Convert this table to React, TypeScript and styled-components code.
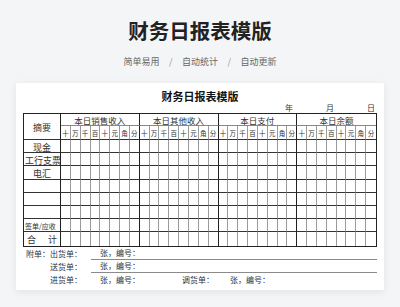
import React from 'react';
import styled, { createGlobalStyle } from 'styled-components';

const GlobalStyle = createGlobalStyle`
    html, body {
        margin: 0;
        padding: 0;
        background: #f4f5f7;
        font-family: "Noto Sans CJK SC", "Noto Sans", sans-serif;
    }
`;

const Page = styled.div`
    width: 400px;
    height: 307px;
    overflow: hidden;
    padding-top: 19px;
    box-sizing: border-box;
`;

const Title = styled.h1`
    margin: 0;
    font-size: 20.5px;
    line-height: 22px;
    font-weight: 700;
    color: #222;
    text-align: center;
`;

const Tagline = styled.div`
    margin-top: 14px;
    display: flex;
    justify-content: center;
    gap: 9.5px;
    font-size: 9px;
    line-height: 14px;
    color: #666;
`;

const Slash = styled.span`
    color: #999;
`;

const Card = styled.div`
    margin: 14px 16px 0;
    padding: 6px 7px 4px;
    background: #fff;
    box-shadow: 0 2px 8px rgba(0, 0, 0, 0.08);
`;

const SheetTitle = styled.div`
    font-size: 11px;
    line-height: 14px;
    font-weight: 700;
    color: #111;
    text-align: center;
`;

const DateRow = styled.div`
    display: flex;
    justify-content: flex-end;
    gap: 33px;
    padding-right: 2px;
    font-size: 8px;
    line-height: 10px;
    color: #333;
`;

const Grid = styled.div`
    display: grid;
    grid-template-columns: 37px repeat(32, 1fr);
    grid-template-rows: 12px 14px repeat(8, 13.2px);
    border: 1.5px solid #222;
    box-sizing: border-box;
    width: 354px;
    color: #333;
`;

const Cell = styled.div<{ $edge?: 'group' | 'none'; $row?: number; $col?: number; $span?: number; $rows?: number; $soft?: boolean; $last?: boolean }>`
    box-sizing: border-box;
    display: flex;
    align-items: center;
    justify-content: center;
    overflow: hidden;
    white-space: nowrap;
    border-right: ${(p) => (p.$edge === 'none' ? '0' : p.$edge === 'group' ? '1.5px solid #222' : '1px solid #9a9a9a')};
    border-bottom: ${(p) => (p.$last ? '0' : p.$soft ? '1px solid #888' : '1px solid #333')};
    grid-column: ${(p) => (p.$col ? `${p.$col} / span ${p.$span || 1}` : 'auto')};
    grid-row: ${(p) => (p.$row ? `${p.$row} / span ${p.$rows || 1}` : 'auto')};
`;

const LabelCell = styled(Cell)<{ $align?: 'center' | 'left' | 'spread'; $small?: boolean }>`
    font-size: ${(p) => (p.$small ? '7px' : '9px')};
    padding: 2px 1px 0;
    justify-content: ${(p) => (p.$align === 'left' ? 'flex-start' : p.$align === 'spread' ? 'space-between' : 'center')};
    border-right: 1.5px solid #222;
    ${(p) => (p.$align === 'spread' ? 'padding: 2px 3px 0;' : '')}
`;

const GroupCell = styled(Cell)`
    font-size: 8.5px;
    padding-top: 1px;
`;

const UnitCell = styled(Cell)`
    font-size: 6.5px;
`;

const Footer = styled.div`
    padding-left: 3px;
    font-size: 8px;
    color: #333;
`;

const FootRow = styled.div`
    display: flex;
    height: 13px;
    align-items: stretch;
`;

const FootLead = styled.span`
    width: 24px;
    display: flex;
    align-items: center;
`;

const FootKind = styled.span`
    width: 41px;
    display: flex;
    align-items: center;
`;

const FootFill = styled.div<{ $ruled?: boolean }>`
    flex: 1;
    display: grid;
    grid-template-columns: 82px 48px 1fr;
    align-items: center;
    padding-left: 9px;
    border-bottom: ${(p) => (p.$ruled ? '1px solid #8a8a8a' : '0')};
`;

const groups = ['本日销售收入', '本日其他收入', '本日支付', '本日余额'];
const units = ['十', '万', '千', '百', '十', '元', '角', '分'];
const rows: { text: React.ReactNode; align: 'center' | 'left' | 'spread'; small?: boolean }[] = [
    { text: '现金', align: 'center' },
    { text: '工行支票', align: 'left' },
    { text: '电汇', align: 'center' },
    { text: '', align: 'center' },
    { text: '', align: 'center' },
    { text: '', align: 'center' },
    { text: '签单/应收', align: 'left', small: true },
    { text: <><span>合</span><span>计</span></>, align: 'spread' },
];

const edgeFor = (i: number) => (i === 31 ? 'none' : i % 8 === 7 ? 'group' : undefined);

const SheetGrid = () => (
    <Grid>
        <LabelCell $row={1} $col={1} $rows={2} $align={'center'}>{'摘要'}</LabelCell>
        {groups.map((g, gi) => (
            <GroupCell key={g} $row={1} $col={2 + gi * 8} $span={8} $soft $edge={gi === 3 ? 'none' : 'group'}>
                {g}
            </GroupCell>
        ))}
        {groups.map((_, gi) => units.map((u, ui) => (
            <UnitCell key={`u${gi}-${ui}`} $row={2} $col={2 + gi * 8 + ui} $edge={edgeFor(gi * 8 + ui)}>
                {u}
            </UnitCell>
        )))}
        {rows.map((r, ri) => (
            <React.Fragment key={ri}>
                <LabelCell $row={3 + ri} $col={1} $align={r.align} $small={r.small} $last={ri === 7}>
                    {r.text}
                </LabelCell>
                {Array.from({ length: 32 }).map((_, ci) => (
                    <Cell key={ci} $row={3 + ri} $col={2 + ci} $edge={edgeFor(ci)} $last={ri === 7} />
                ))}
            </React.Fragment>
        ))}
    </Grid>
);

export const App = () => (
    <>
        <GlobalStyle />
        <Page>
            <Title>{'财务日报表模版'}</Title>
            <Tagline>
                <span>{'简单易用'}</span>
                <Slash>{'/'}</Slash>
                <span>{'自动统计'}</span>
                <Slash>{'/'}</Slash>
                <span>{'自动更新'}</span>
            </Tagline>
            <Card>
                <SheetTitle>{'财务日报表模版'}</SheetTitle>
                <DateRow>
                    <span>{'年'}</span>
                    <span>{'月'}</span>
                    <span>{'日'}</span>
                </DateRow>
                <SheetGrid />
                <Footer>
                    <FootRow>
                        <FootLead>{'附单：'}</FootLead>
                        <FootKind>{'出货单：'}</FootKind>
                        <FootFill $ruled><span>{'张，编号：'}</span></FootFill>
                    </FootRow>
                    <FootRow>
                        <FootLead />
                        <FootKind>{'送货单：'}</FootKind>
                        <FootFill $ruled><span>{'张，编号：'}</span></FootFill>
                    </FootRow>
                    <FootRow>
                        <FootLead />
                        <FootKind>{'进货单：'}</FootKind>
                        <FootFill>
                            <span>{'张，编号：'}</span>
                            <span>{'调货单：'}</span>
                            <span>{'张，编号：'}</span>
                        </FootFill>
                    </FootRow>
                </Footer>
            </Card>
        </Page>
    </>
);

export default App;
